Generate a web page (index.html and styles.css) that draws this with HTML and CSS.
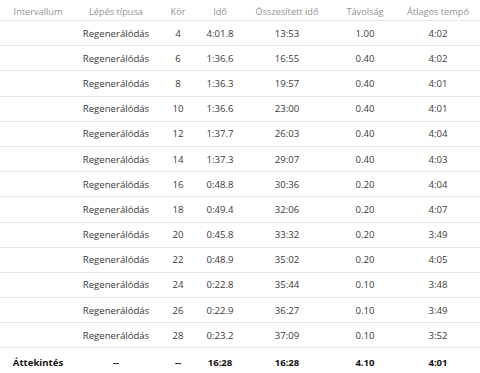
FILE: index.html
```html
<!DOCTYPE html>
<html lang="hu">
<head>
    <meta charset="UTF-8">
    <meta name="viewport" content="width=device-width, initial-scale=1.0">
    <title>Körök</title>
    <link rel="stylesheet" href="styles.css">
</head>
<body>
    <table class="laps">
        <colgroup>
            <col class="c-interval">
            <col class="c-type">
            <col class="c-lap">
            <col class="c-time">
            <col class="c-total">
            <col class="c-dist">
            <col class="c-pace">
        </colgroup>
        <thead>
            <tr>
                <th>Intervallum</th>
                <th>Lépés típusa</th>
                <th>Kör</th>
                <th>Idő</th>
                <th>Összesített idő</th>
                <th>Távolság</th>
                <th>Átlagos tempó</th>
            </tr>
        </thead>
        <tbody>
            <tr><td></td><td>Regenerálódás</td><td>4</td><td>4:01.8</td><td>13:53</td><td>1.00</td><td>4:02</td></tr>
            <tr><td></td><td>Regenerálódás</td><td>6</td><td>1:36.6</td><td>16:55</td><td>0.40</td><td>4:02</td></tr>
            <tr><td></td><td>Regenerálódás</td><td>8</td><td>1:36.3</td><td>19:57</td><td>0.40</td><td>4:01</td></tr>
            <tr><td></td><td>Regenerálódás</td><td>10</td><td>1:36.6</td><td>23:00</td><td>0.40</td><td>4:01</td></tr>
            <tr><td></td><td>Regenerálódás</td><td>12</td><td>1:37.7</td><td>26:03</td><td>0.40</td><td>4:04</td></tr>
            <tr><td></td><td>Regenerálódás</td><td>14</td><td>1:37.3</td><td>29:07</td><td>0.40</td><td>4:03</td></tr>
            <tr><td></td><td>Regenerálódás</td><td>16</td><td>0:48.8</td><td>30:36</td><td>0.20</td><td>4:04</td></tr>
            <tr><td></td><td>Regenerálódás</td><td>18</td><td>0:49.4</td><td>32:06</td><td>0.20</td><td>4:07</td></tr>
            <tr><td></td><td>Regenerálódás</td><td>20</td><td>0:45.8</td><td>33:32</td><td>0.20</td><td>3:49</td></tr>
            <tr><td></td><td>Regenerálódás</td><td>22</td><td>0:48.9</td><td>35:02</td><td>0.20</td><td>4:05</td></tr>
            <tr><td></td><td>Regenerálódás</td><td>24</td><td>0:22.8</td><td>35:44</td><td>0.10</td><td>3:48</td></tr>
            <tr><td></td><td>Regenerálódás</td><td>26</td><td>0:22.9</td><td>36:27</td><td>0.10</td><td>3:49</td></tr>
            <tr><td></td><td>Regenerálódás</td><td>28</td><td>0:23.2</td><td>37:09</td><td>0.10</td><td>3:52</td></tr>
        </tbody>
        <tfoot>
            <tr><td>Áttekintés</td><td>--</td><td>--</td><td>16:28</td><td>16:28</td><td>4.10</td><td>4:01</td></tr>
        </tfoot>
    </table>
</body>
</html>
```

FILE: styles.css
```css
body {
    margin: 0;
    background: #fff;
    font-family: "Open Sans", sans-serif;
    font-size: 9.6px;
    color: #3a3a3a;
}
.laps {
    width: 480px;
    border-collapse: collapse;
    table-layout: fixed;
}
.c-interval { width: 76px; }
.c-type { width: 80px; }
.c-lap { width: 44px; }
.c-time { width: 40px; }
.c-total { width: 94px; }
.c-dist { width: 62px; }
.c-pace { width: 84px; }
.laps th,
.laps td {
    padding: 0;
    text-align: center;
    white-space: nowrap;
    border-bottom: 1px solid #e6e6e6;
}
.laps th {
    height: 17px;
    padding-top: 3px;
    font-size: 9.2px;
    font-weight: normal;
    color: #929292;
}
.laps tbody td {
    height: 24.2px;
}
.laps tfoot td {
    height: 22px;
    padding-top: 3px;
    font-weight: bold;
    color: #111;
    border-bottom: none;
}
```
